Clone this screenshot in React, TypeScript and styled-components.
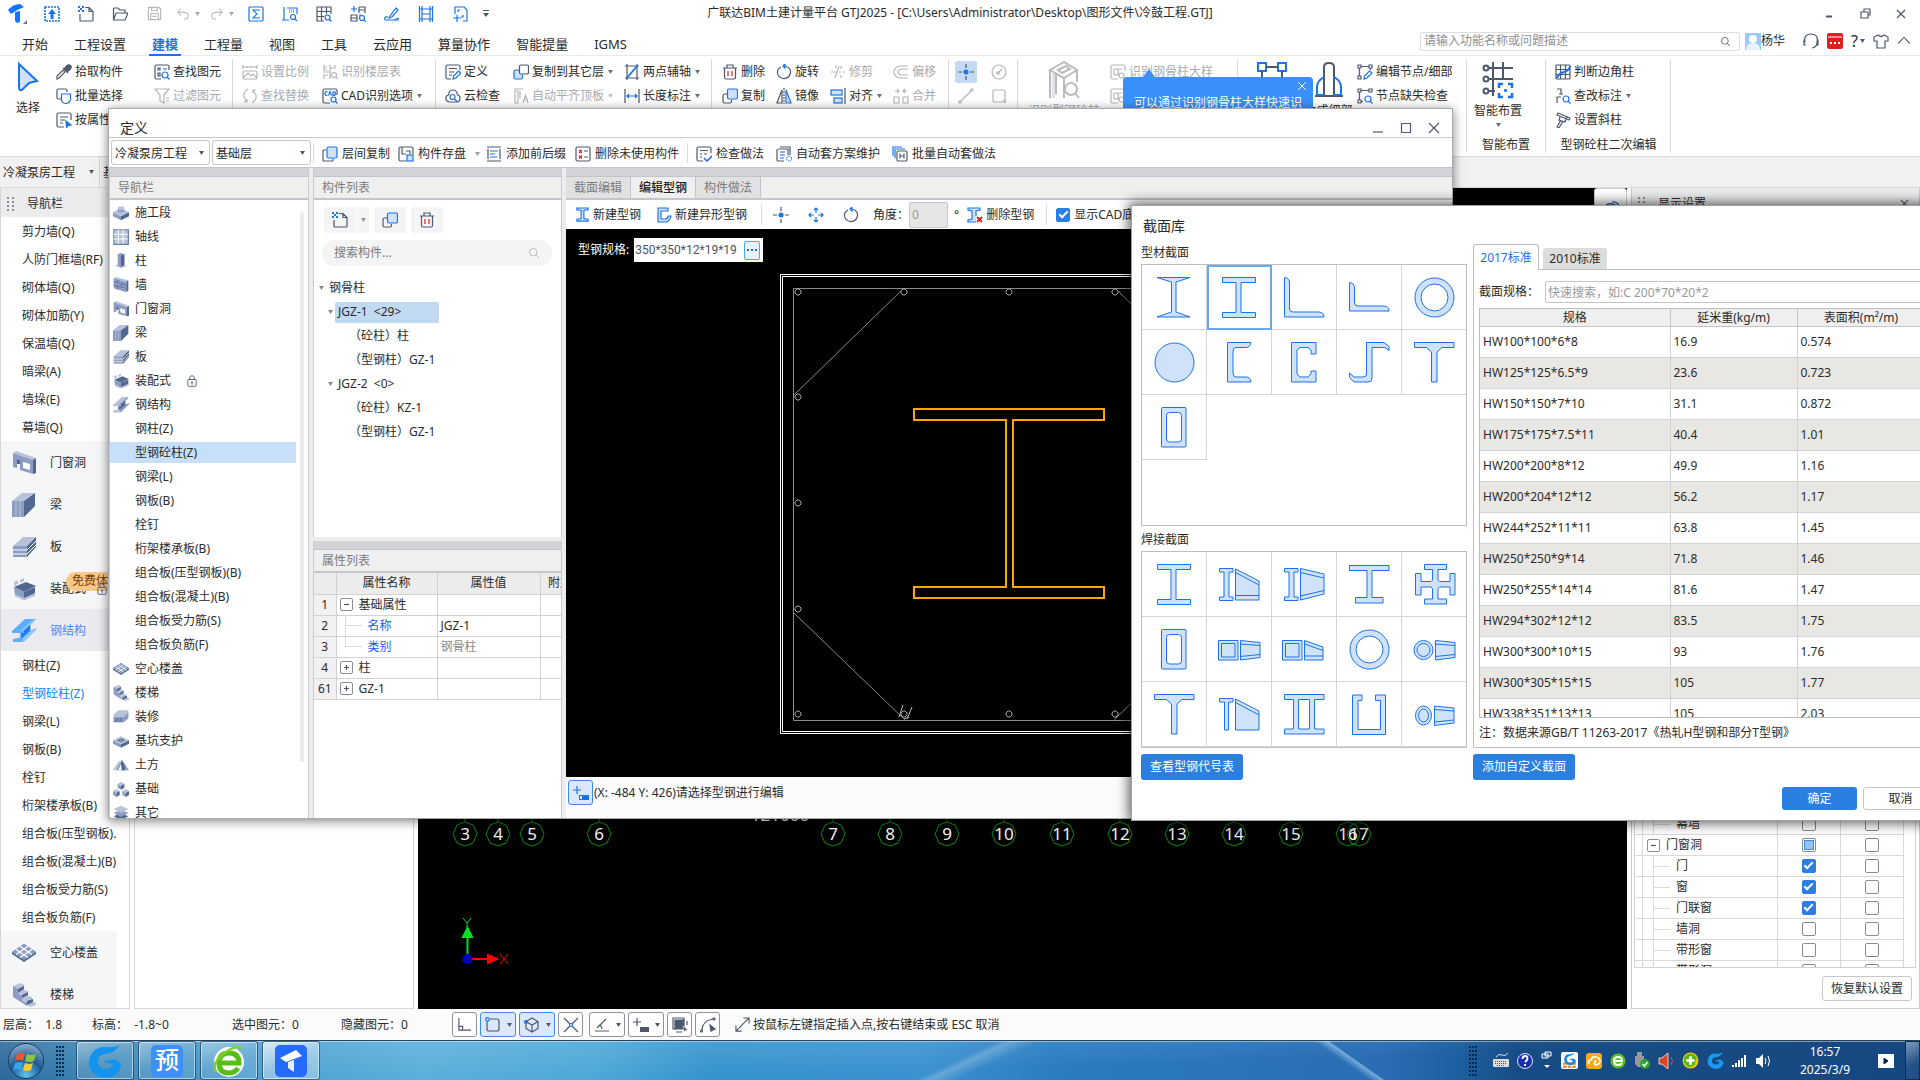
import React, { useState } from "react";
import styled, { createGlobalStyle, css } from "styled-components";

const BLUE = "#1a73e8";
const SLATE = "#4d586c";
const TEXT = "#2b2b2b";
const LINE = "#d9d9dc";

const Global = createGlobalStyle`
  *, *::before, *::after { box-sizing: border-box; }
  html, body { margin: 0; height: 100%; overflow: hidden; }
  body, button, input, select, table {
    font-family: "Noto Sans", "Noto Sans CJK SC", sans-serif;
    font-size: 12px;
    line-height: 16px;
    color: ${TEXT};
  }
  button { background: none; border: 0; padding: 0; margin: 0; white-space: nowrap; }
  input, select { margin: 0; outline: 0; }
  ul { list-style: none; margin: 0; padding: 0; }
  h1, h2, h3, p { margin: 0; font-weight: 400; font-size: inherit; }
  svg { display: block; flex: none; }
`;

/* ------------------------------------------------------------------ icons */

const glyphs: Record<string, React.ReactNode> = {
  pick: (<><path d="M1 15l2-1 6-6-2-2-6 6z" /><path d="M7 4l5 5M8 5l3-3.5q2-1.500 3.500 0t0 3.500L11 8z" fill="currentColor" /></>),
  batch: (<><path d="M5 11H2.500Q1 11 1 9.500V2.500Q1 1 2.500 1h7Q11 1 11 2.500V4" /><path d="M5.500 6h9v6q-1 3-4.500 3.500Q6 15 5.500 12z" stroke="var(--b)" fill="#fff" /></>),
  attr: (<><path d="M15 8V2.500Q15 1 13.500 1h-11Q1 1 1 2.500v11Q1 15 2.500 15H8M4 5h8M4 8h5M4 11h3" /><path d="M10 9l5 4-3 .5-1.500 2z" fill="var(--b)" stroke="var(--b)" /></>),
  find: (<><path d="M15 6V2.500Q15 1 13.500 1h-11Q1 1 1 2.500v11Q1 15 2.500 15H7M4 4h2v2H4zM4 9h2v3H4zM9 5h4" /><circle cx="11" cy="11" r="3" stroke="var(--b)" /><path d="M13 13l2.500 2.500" stroke="var(--b)" /></>),
  filter: <path d="M1 1h14l-5 6v8l-4-2V7zM12 10h3M12 13h3" />,
  scale: <path d="M1 3h14M1 1v4M15 1v4M5 2v2M9 2v2M3 7h10q2 0 2 2v4q0 2-2 2H3q-2 0-2-2V9q0-2 2-2M2 13l4-4 3 3 2-2 4 4" />,
  floors: (<><path d="M2 1v5h3M2 3h3M1 8h6M8 1v14M8 4h5V1M2 15v-4h4" /><circle cx="12" cy="11" r="2.500" /><path d="M14 13l2 2" /></>),
  replace: <path d="M6 1Q1 4 2 9l3 5M2 14h3v-3M10 15q5-3 4-8l-3-5M14 2h-3v3" />,
  cad: (<><path d="M15 7V2.500Q15 1 13.500 1h-11Q1 1 1 2.500v11Q1 15 2.500 15H8" /><path d="M5.500 4Q3 3 3 5.500T5.500 7M6.500 7.500L8 3.500l1.500 4M11 3.500v4q2.500 0 2.500-2t-2.500-2" stroke="var(--b)" /><circle cx="11.500" cy="11.500" r="2.500" stroke="var(--b)" /><path d="M13.500 13.500l2 2" stroke="var(--b)" /></>),
  define: (<><path d="M15 6V2.500Q15 1 13.500 1h-11Q1 1 1 2.500v11Q1 15 2.500 15H6M4 4.500h8M4 8h5M4 11h3" /><path d="M8 15l.5-3 5-5L16 9l-5 5z" stroke="var(--b)" /></>),
  cloud: (<><path d="M4 14Q0 13 1 9q1-2 2.500-2Q4 2 8 2t4.500 5Q15 7 15 10q0 4-3 4z" /><circle cx="7.500" cy="9" r="2.500" stroke="var(--b)" /><path d="M9.500 11l3 3" stroke="var(--b)" /></>),
  copyTo: (<><path d="M7 6H2.500Q1 6 1 7.500v6Q1 15 2.500 15H8q1.500 0 1.500-1.500V11" fill="var(--f)" stroke="var(--b)" /><rect x="6.500" y="1" width="9" height="9" rx="1.500" fill="#fff" /></>),
  flat: <path d="M1 1h9M2 3v12h3V3zM7 3v7M10 15l2.500-8 2.500 8M11 12h3" />,
  axis: (<><path d="M1 2h14M1 14h14M3 0v16M13 0v16" /><path d="M3 14L13 2" stroke="var(--b)" strokeWidth="1.800" /></>),
  length: (<><path d="M1 1v14M15 1v14" /><path d="M3 8h10M5 6L3 8l2 2M11 6l2 2-2 2" stroke="var(--b)" /></>),
  trash: (<><path d="M1 4h14M5 4V1h6v3M2.500 4v9.500Q2.500 15 4 15h8q1.500 0 1.500-1.500V4" /><path d="M6 7v5M10 7v5" stroke="var(--r)" /></>),
  rotate: (<><path d="M5 3Q1 5 1.500 9T7 14.500Q13 15 14.500 9 15 4 10 2.200" /><path d="M9 0v4l-2-2z" stroke="var(--b)" fill="var(--b)" /></>),
  trim: <path d="M6 1v3M5 14L9 2M1 8h5M9 8h2M13 8h2M11 2v3M11 11v3" />,
  offset: <path d="M15 2H7Q1 3 1 8t6 6h8M15 5H8Q5 6 5 8t3 3h7" />,
  copy: (<><path d="M5 6H2.500Q1 6 1 7.500v6Q1 15 2.500 15H8q1.500 0 1.500-1.500V12" /><rect x="5.500" y="1" width="10" height="10" rx="1.500" fill="var(--f)" stroke="var(--b)" /></>),
  mirror: (<><path d="M6 2v13H1z" /><path d="M10 2v13h5z" fill="var(--f)" stroke="var(--b)" /><path d="M8 0v16" strokeDasharray="2 1" /></>),
  align: (<><path d="M15 0v16" /><rect x="1" y="2" width="11" height="5" fill="var(--f)" stroke="var(--b)" /><rect x="4" y="10" width="8" height="5" fill="var(--f)" stroke="var(--b)" /></>),
  merge: <path d="M1 9h5v6H1zM10 9h5v6h-5zM2 3h4M4 1l2 2-2 2M14 3h-4M12 1l-2 2 2 2" />,
  point: (<><path d="M8 0v4M8 12v4M0 8h4M12 8h4" /><circle cx="8" cy="8" r="2" fill="var(--b)" stroke="var(--b)" /></>),
  circle: (<><circle cx="8" cy="8" r="7" /><path d="M7 9l4-4" /><circle cx="7" cy="9" r="1.200" /></>),
  line: (<><path d="M3 13L13 3" /><circle cx="2" cy="14" r="1.200" /><circle cx="14" cy="2" r="1.200" /></>),
  rect: (<><path d="M4 2h8q2 0 2 2v8M12 14H4q-2 0-2-2V4q0-2 2-2" /><circle cx="13.500" cy="13.500" r="1.200" /></>),
  recog: (<><path d="M15 7V2.500Q15 1 13.500 1h-11Q1 1 1 2.500v11Q1 15 2.500 15H8M4 5h8M8 5v6M4 11h5M4 5v6" /><circle cx="11.500" cy="11.500" r="2.500" /><path d="M13.500 13.500l2 2" /></>),
  nodeEdit: (<><path d="M1 1h3v3H1zM12 1h3v3h-3zM1 12h3v3H1zM4 2.500h8M2.500 4v8M13.500 4v2" /><path d="M7 15l.5-3 5-5L15 9l-5 5z" stroke="var(--b)" /></>),
  nodeMiss: (<><path d="M1 1h3v3H1zM12 1h3v3h-3zM1 12h3v3H1zM4 2.500h8M2.500 4v8M4 13.500h2" /><circle cx="11" cy="11" r="3" stroke="var(--b)" /><path d="M13 13l2.500 2.500" stroke="var(--b)" /></>),
  corner: (<><rect x="1" y="1" width="14" height="14" rx="1" /><path d="M1 5.500h14M1 10.500h14M5.500 1v14M10.500 1v14" /><path d="M2 14Q4 9 9 8t6-6" stroke="var(--b)" strokeWidth="1.800" /></>),
  mark: (<><path d="M2 1h4v5M4 6h4M2 15V9h4" /><circle cx="11" cy="11" r="3" stroke="var(--b)" /><path d="M13 13l2.500 2.500" stroke="var(--b)" /></>),
  slant: <path d="M3 1l12 5-1 2L2 3zM5 5l-1 3 6 2 1-2M8 9l-4 7-2-1 4-7M12 4l-2 5" />,
  search: (<><circle cx="7" cy="7" r="5" /><path d="M10.500 10.500l4 4" /></>),
  upload: (<><rect x="1" y="1" width="14" height="14" strokeDasharray="2 1" strokeWidth="1.600" stroke="var(--b)" /><path d="M8 3l4 5H9.500v5h-3V8H4z" fill="var(--b)" stroke="none" /></>),
  newDoc: (<><path d="M7 1.500h4l4 4V14q0 1-1 1H3q-1 0-1-1V8M11 1.500v4h4" /><path d="M0 0h2v2H0zM4 0h2v2H4zM2 2h2v2H2zM0 4h2v2H0zM4 4h2v2H4z" fill="var(--b)" stroke="none" /></>),
  open: <path d="M1.500 14V3q0-1 1-1H6l2 2h5v3M1.500 14L4 7h12l-3 7z" />,
  save: <path d="M1.500 1.500h11l2 2v11h-13zM5 1.500V5h6V1.500M4 14.500V8h8v6.500M6 11h4" />,
  undo: <path d="M2 6h7q5 0 5 4t-5 4M6 2L2 6l4 4" />,
  redo: <path d="M14 6H7q-5 0-5 4t5 4M10 2l4 4-4 4" />,
  sum: (<g stroke="var(--b)"><rect x="1" y="1" width="14" height="14" rx="1" /><path d="M11 5V4H5l4 4-4 4h6v-1" /></g>),
  sheet: (<><path d="M2 1v13h5M0 14h4M5 2h10v6" stroke="var(--b)" /><path d="M7 4h6M7 6h6" stroke="var(--b)" strokeDasharray="1 1" /><circle cx="11" cy="11" r="2.500" stroke="var(--b)" /><path d="M13 13l2 2" stroke="var(--b)" /></>),
  gridS: (<><path d="M15 8V1H1v14h7M1 5.500h14M1 10.500h7M5.500 1v14M10.500 1v7" /><circle cx="11.500" cy="11.500" r="2.500" stroke="var(--b)" /><path d="M13.500 13.500l2 2" stroke="var(--b)" /></>),
  gridT: (<><path d="M9 1h6v6M9 1v6M9 4h6M1 9h6v6H1zM1 12h6M9 9h2" /><path d="M4 0v6M1 3h6" stroke="var(--b)" /><circle cx="12" cy="12" r="2.500" stroke="var(--b)" /><path d="M14 14l2 2" stroke="var(--b)" /></>),
  sign: <path d="M1 14h14M1 14q-1-4 3-3M6 10l6-8 2 2-6 7-3 1zM10 14l5-2" stroke="var(--b)" />,
  ladder: <path d="M1.500 0v16M14.500 0v16M4 0v16M12 0v16M1 3h14M4 8h8M1 13h14" stroke="var(--b)" />,
  pageFit: (<g stroke="var(--b)"><path d="M3 8V1h9l3 3v11h-4M5 9v7M1 12h8M8 4H6v2M11 9v2H9" /></g>),
  layers: (<><path d="M4 4H2q-1 0-1 1v9q0 1 1 1h8q1 0 1-1v-1" /><rect x="5" y="1" width="10" height="11" rx="1.500" fill="var(--f)" stroke="var(--b)" /></>),
  saveC: (<><path d="M15 8V2.500Q15 1 13.500 1h-11Q1 1 1 2.500v11Q1 15 2.500 15H8M4 1v7h4M8 5h4v3" /><rect x="9" y="9" width="6" height="6" stroke="var(--b)" fill="var(--f)" /></>),
  prefix: (<><path d="M1 1h14M1 15h14M2 3v10M14 3v10" /><path d="M4 5h8M4 8h5M4 11h7" stroke="var(--b)" /></>),
  unused: (<><rect x="1" y="1" width="14" height="14" rx="1.500" /><path d="M9 5h4M9 11h4" /><path d="M4 4l3 3M7 4L4 7M4 9.500l3 3M7 9.500l-3 3" stroke="var(--r)" /></>),
  check: (<><path d="M15 7V2.500Q15 1 13.500 1h-11Q1 1 1 2.500v11Q1 15 2.500 15H7M4 4.500h8M4 8h2M8 8h3M4 11h2" /><path d="M8 12l3 3 5-5" stroke="var(--b)" strokeWidth="1.600" /></>),
  plan: (<><path d="M4 1h10v8M2 3h10v6M1 5v9q0 1 1 1h6M1 5V3M4 6h5" /><path d="M4 9h5M4 12h4" stroke="var(--b)" /><circle cx="13" cy="12.500" r="2.500" stroke="var(--b)" strokeDasharray="1 1" /></>),
  batchH: (<><path d="M1 10V1h9M3 12V3h10" stroke="var(--b)" /><rect x="5" y="5" width="10" height="10" rx="1" /><path d="M8 7.500v5M12 7.500v5M8 10h4" /></>),
  beam: <path d="M2 1h12v2h-1l-3.500.8v8.400L13 13h1v2H2v-2h1l3.500-.8V3.800L3 3H2z" stroke="var(--b)" fill="var(--f)" />,
  beamDel: (<><path d="M9 15H1v-2l4-1V4L1 3V1h12v2L9 4v5" stroke="var(--b)" fill="var(--f)" /><path d="M10 10l5 5M15 10l-5 5" stroke="var(--r)" strokeWidth="1.800" /></>),
  odd: <path d="M12 1H2v14h8q4-1 5-6h-3q0 3-3 3H5V4h7z" stroke="var(--b)" fill="var(--f)" />,
  move: <path d="M8 1v5M8 10v5M1 8h5M10 8h5M6 3l2-2 2 2M6 13l2 2 2-2M3 6L1 8l2 2M13 6l2 2-2 2" stroke="var(--b)" />,
  lock: (<><rect x="2.500" y="6" width="11" height="9" rx="1" /><path d="M5 6V4q0-3 3-3t3 3v2M8 11v2" /><circle cx="8" cy="10" r="1" /></>),
  head: <path d="M2 10Q0 1 8 1t6 9q0 4-5 5M2 7h-1v5h2M14 7h1v5h-2" />,
  shirt: <path d="M5 2L1 4v4h3v7h8V8h3V4l-4-2q-3 3-6 0z" />,
  chevron: <path d="M1 11l7-7 7 7" />,
  expand: <path d="M1 15L15 1M9 1h6v6M1 9v6h6" />,
  ortho: <path d="M2 1v13h13M2 10h4v4" />,
  snapBox: (<><path d="M5 2h7q2 0 2 2v8q0 2-2 2H4q-2 0-2-2V5" /><circle cx="2.500" cy="2.500" r="1.800" stroke="var(--b)" /></>),
  cube: (<><path d="M8 1l6 3.500v7L8 15l-6-3.500v-7zM2 4.500L8 8l6-3.500M8 8v7" /><circle cx="2" cy="5" r="1.500" stroke="var(--b)" /></>),
  cross: (<><path d="M1 1l14 14M15 1L1 15" /><circle cx="8" cy="8" r="1.500" stroke="var(--b)" fill="#fff" /></>),
  angle: (<><path d="M3 11L12 2M5 8q3 1 3 4" /><path d="M1 14h14" stroke="#a9adb8" strokeWidth="2" /></>),
  dynIn: (<><path d="M4 1v8M0 5h8" /><path d="M7 10h9v5H7z" fill="currentColor" stroke="none" /></>),
  dynInOn: (<><path d="M4 1v8M0 5h8" stroke="var(--b)" /><path d="M6 10h10v5H6z" fill="var(--b)" stroke="none" /><path d="M7 11h2v3H7z" fill="#fff" stroke="none" /></>),
  winSel: (<><path d="M4 12H1V1h11v3M15 8V4M4 15h6" /><path d="M3 3h9v9H3z" fill="currentColor" /><path d="M11 9l5 4-3 .5-1 2z" fill="currentColor" stroke="#fff" strokeWidth=".5" /></>),
  arcSel: (<><path d="M2 13Q2 4 13 2" /><circle cx="1.500" cy="14" r="1" /><circle cx="14" cy="1.800" r="1" /><path d="M10 8l5 4-4 2z" fill="currentColor" /></>),
  view: (<><path d="M1 9q6-9 14 0M4 8q4-3 8 0" /><path d="M9 3q5 0 6 5" stroke="var(--b)" /></>),
};

const GlyphSvg = styled.svg<{ $off?: boolean }>`
  --b: ${(p) => (p.$off ? "#b4b6ba" : BLUE)};
  --r: ${(p) => (p.$off ? "#b4b6ba" : "#d62027")};
  --f: ${(p) => (p.$off ? "#fff" : "#cfe1fb")};
  color: ${(p) => (p.$off ? "#b4b6ba" : SLATE)};
  fill: none;
  stroke: currentColor;
  stroke-width: 1.200;
`;

const Glyph = ({ n, s = 16, off }: { n: string; s?: number; off?: boolean }) => (
  <GlyphSvg $off={off} width={s} height={s} viewBox="0 0 16 16" aria-hidden="true">{glyphs[n]}</GlyphSvg>
);

const CaretSvg = styled.svg<{ $c?: string }>`fill: ${(p) => p.$c || SLATE};`;
const Caret = ({ c }: { c?: string }) => (
  <CaretSvg $c={c} width="5" height="4" viewBox="0 0 5 4" aria-hidden="true"><path d="M0 0h5L2.500 4z" /></CaretSvg>
);

/* solid building-element icons of the navigation tree */
const L = "#b8c3da", M = "#8c9cc2", D = "#52678f";
const solids: Record<string, (l: string, m: string, d: string) => React.ReactNode> = {
  stage: (l, m, d) => (<><path d="M0 11l12-6 12 6-12 6z" fill={l} /><path d="M0 11l12 6v6L0 17z" fill={m} /><path d="M24 11l-12 6v6l12-6z" fill={d} /><ellipse cx="12" cy="8" rx="5" ry="3" fill={m} /><ellipse cx="12" cy="5" rx="5" ry="3" fill={l} /></>),
  grid: (l, m, d) => (<><rect x="1" y="1" width="22" height="22" fill={l} stroke={m} strokeWidth="2" /><path d="M8 1v22M15 1v22M1 8h22M1 15h22" stroke="#fff" strokeWidth="1.500" /><path d="M23 1v22H1" stroke={d} fill="none" /></>),
  column: (l, m, d) => (<><path d="M3 19l9-4 9 4-9 4z" fill={l} /><path d="M7 2l5-2 5 2v16l-5 3-5-3z" fill={m} /><path d="M12 4l5-2v16l-5 3z" fill={d} /></>),
  wall: (l, m, d) => (<><path d="M1 2l3-2 19 5-3 2z" fill={l} /><path d="M1 2l19 5v16L1 17z" fill={m} /><path d="M20 7l3-2v15l-3 3z" fill={d} /><path d="M1 7l19 5M1 12l19 5M7 4v5M13 10v5M7 13v6" stroke={d} fill="none" /></>),
  opening: (l, m, d) => (<><path d="M1 2l3-2 20 7-3 2z" fill={l} /><path d="M1 2l20 7v14l-13-4V9L5 8v9l-4-1z" fill={m} /><path d="M11 11l7 2v6l-7-2z" fill="#fff" /><path d="M21 9l3-2v15l-3 1zM5 8l3 1v4H5z" fill={d} /></>),
  beam: (l, m, d) => (<><path d="M0 8L10 0h13L12 8z" fill={l} /><path d="M0 8h12v16H0z" fill={m} /><path d="M12 8L23 0v13L12 24z" fill={d} /><path d="M4 8v16M8 8v16" stroke={l} /></>),
  slab: (l, m, d) => (<><path d="M1 11L11 2h13l-9 9z" fill={l} /><path d="M1 11h14v11H1z" fill={m} /><path d="M15 11l9-9v10l-9 10z" fill={d} /><path d="M1 15h14l9-9M1 19h14l9-9" stroke="#fff" fill="none" /></>),
  precast: (l, m, d) => (<><path d="M2 10l12-5 10 4-12 6z" fill={d} /><path d="M2 10l10 5v8L3 19z" fill={m} /><path d="M12 15l11-5v8l-11 5z" fill={d} /><path d="M2 5l4-2v4L2 9zM8 3l4-2v3L8 6zM3 17l9 4 11-5v3l-11 4-9-4z" fill={l} /></>),
  steel: (l, m, d) => (<><path d="M0 12L13 0h11L12 12z" fill={l} /><path d="M8 12l14-12v3l-3 2v6l5-2v2L12 23H1v-3h6z" fill={m} /><path d="M9 14l9-8v6l-9 8z" fill={d} /><path d="M0 12h12v2H0zM1 20l6-1h4l-1 4H1z" fill={l} /></>),
  hollow: (l, m, d) => (<><path d="M0 11l12-8 12 8v2l-12 8-12-8z" fill={d} /><path d="M0 11l12-8 12 8-12 8z" fill={m} /><path d="M4 8.500l12 8M8 5.500l12 8M4 13.500l12-8M8 16.500l12-8" stroke="#fff" strokeWidth="1.200" /></>),
  stair: (l, m, d) => (<><path d="M1 3l8-3 3 2v5l4 1v5l4 1v4l4 2v2l-6 2L1 12z" fill={l} /><path d="M1 3l5 3v5l4 2v5l5 2v3L1 14z" fill={m} /><path d="M6 6l6-3v3L6 10zM10 12l6-3v3l-6 3zM15 18l6-2v3l-6 3z" fill={d} /></>),
  finish: (l, m, d) => (<><path d="M1 8l7-6h15v12l-7 6H1z" fill={l} /><path d="M1 12h15l7-7v9l-7 6H1z" fill={m} /><path d="M3 15h12M3 18h12" stroke={d} strokeDasharray="2 2" strokeWidth="2" /></>),
  pit: (l, m, d) => (<><path d="M0 11l12-6 12 6-12 6z" fill={l} /><path d="M0 11l12 6v5L0 16z" fill={m} /><path d="M24 11l-12 6v5l12-6z" fill={d} /><path d="M6 11l6-3 6 3-6 3z" fill={d} /><path d="M10 10l4 2" stroke="#fff" /></>),
  earth: (l, m, d) => (<><path d="M0 20L9 5l6 15z" fill={l} /><path d="M5 20L13 4l11 16z" fill={m} /><path d="M13 4l4 7 1 9h-6z" fill={d} /><path d="M8 20l4-9 1 9z" fill="#fff" /></>),
  base: (l, m, d) => (<>{[[7, 1], [0, 12], [14, 12]].map(([x, y]) => (<g key={x} transform={`translate(${x} ${y})`}><path d="M0 3l5-3 5 3-5 3z" fill={l} /><path d="M0 3l5 3v6L0 9z" fill={m} /><path d="M10 3L5 6v6l5-3z" fill={d} /></g>))}</>),
  other: (l, m, d) => (<><path d="M1 17l11-5 11 5-11 6z" fill={d} /><path d="M1 12l11-5 11 5-11 6z" fill={m} /><path d="M1 6l11-5 11 5-11 6z" fill={l} /></>),
};
const Solid = ({ n, s = 16, active }: { n: string; s?: number; active?: boolean }) => (
  <svg width={s} height={s} viewBox="0 0 24 24" aria-hidden="true">
    {active ? solids[n]("#5aaefc", "#8fc6ff", "#1b7df5") : solids[n](L, M, D)}
  </svg>
);

/* ------------------------------------------------------------ main window */

const Desktop = styled.div`
  height: 100vh;
  width: 100%;
  position: relative;
  overflow: hidden;
  display: flex;
  flex-direction: column;
  background: #fff;
`;

const TitleBar = styled.header`
  height: 27px;
  flex: none;
  display: grid;
  grid-template-columns: 1fr auto 1fr;
  align-items: center;
  h1 { padding-bottom: 2px; }
`;
const QuickBar = styled.div`display: flex; align-items: center;`;
const QuickButton = styled.button<{ $w?: number }>`
  width: ${(p) => p.$w || 34}px;
  height: 24px;
  display: flex;
  align-items: center;
  justify-content: center;
  gap: 5px;
`;
const WindowButtons = styled.div<{ $gap: number; $pad: number }>`
  display: flex;
  justify-content: flex-end;
  align-items: center;
  gap: ${(p) => p.$gap}px;
  padding-right: ${(p) => p.$pad}px;
`;

const MenuBar = styled.nav`
  height: 29px;
  flex: none;
  display: flex;
  padding: 0 5px 0 9px;
  border-bottom: 1px solid #e8eaed;
`;
const MenuTab = styled.button<{ $on?: boolean }>`
  padding: 7px 3px 0;
  margin: 0 10px;
  height: 29px;
  font-size: 13px;
  display: flex;
  align-items: flex-start;
  line-height: 20px;
  ${(p) => p.$on && css`color: ${BLUE}; font-weight: 700; border-bottom: 2px solid ${BLUE};`}
`;
const MenuRight = styled.div`
  margin-left: auto;
  display: flex;
  align-items: center;
`;
const HelpSearch = styled.label`
  width: 320px;
  height: 19px;
  border: 1px solid #dcdde0;
  border-radius: 2px;
  display: flex;
  align-items: center;
  padding: 0 8px 0 3px;
  margin-right: 5px;
  input { flex: 1; border: 0; padding: 0; background: none; min-width: 0; }
  input::placeholder { color: #8d8f94; opacity: 1; }
`;
const User = styled.button`display: flex; align-items: center; margin-right: 14px;`;
const TopIcon = styled.button`margin: 0 4px; display: flex; align-items: center; gap: 2px; font-size: 16px;`;

const Ribbon = styled.section`
  height: 100px;
  flex: none;
  display: flex;
  padding: 3px 0;
`;
const Group = styled.div<{ $w: number; $pad?: number }>`
  width: ${(p) => p.$w}px;
  padding-left: ${(p) => p.$pad || 0}px;
  flex: none;
  display: grid;
  grid-template-rows: 73px 1fr;
  border-right: 1px solid ${LINE};
`;
const GroupBody = styled.div`display: flex; padding-top: 1px;`;
const GroupLabel = styled.div<{ $pull?: number }>`
  text-align: center;
  padding-top: 5px;
  padding-right: ${(p) => p.$pull || 0}px;
`;
const Col = styled.div<{ $w: number }>`
  width: ${(p) => p.$w}px;
  flex: none;
  display: flex;
  flex-direction: column;
`;
const Tool = styled.button<{ $off?: boolean }>`
  height: 24px;
  display: flex;
  align-items: center;
  gap: 3px;
  color: ${(p) => (p.$off ? "#a9abb0" : TEXT)};
  ${CaretSvg} { margin-left: 1px; }
`;
const BigTool = styled.button<{ $w: number; $off?: boolean }>`
  width: ${(p) => p.$w}px;
  flex: none;
  display: flex;
  flex-direction: column;
  align-items: center;
  gap: 4px;
  padding-top: 1px;
  color: ${(p) => (p.$off ? "#a9abb0" : TEXT)};
`;
const SelectTool = styled(BigTool)`gap: 8px; padding-top: 2px;`;
const DrawGrid = styled.div`
  display: grid;
  grid-template-columns: 22px 22px;
  grid-auto-rows: 22px;
  gap: 2px 11px;
  padding-top: 1px;
`;
const DrawTool = styled.button<{ $on?: boolean }>`
  display: grid;
  place-items: center;
  border-radius: 2px;
  background: ${(p) => (p.$on ? "#c3daf2" : "none")};
`;

const ContextBar = styled.div`
  height: 32px;
  flex: none;
  background: #f1f1f1;
  border: 1px solid #dadada;
  border-width: 1px 0;
  display: flex;
`;
const ComboWrap = styled.label<{ $w: number; $framed?: boolean }>`
  width: ${(p) => p.$w}px;
  display: grid;
  align-items: center;
  border-right: 1px solid #d4d6d9;
  ${(p) => p.$framed && css`border: 1px solid #c4c7cb; border-radius: 3px; height: 25px; background: #fff;`}
  select, ${CaretSvg} { grid-area: 1 / 1; }
  ${CaretSvg} { justify-self: end; margin-right: 5px; pointer-events: none; }
  select { appearance: none; border: 0; background: none; padding: 2px 0 0 3px; width: 100%; height: 100%; }
`;
const Combo = ({ w, value, label, framed }: { w: number; value: string; label: string; framed?: boolean }) => (
  <ComboWrap $w={w} $framed={framed}>
    <select aria-label={label} defaultValue={value}><option>{value}</option></select>
    <Caret />
  </ComboWrap>
);

const Work = styled.main`
  flex: 1;
  min-height: 0;
  display: flex;
`;
const SideNav = styled.aside`
  width: 130px;
  flex: none;
  border: 1px solid #d6d6d9;
  border-top: 0;
  overflow: hidden;
`;
const PanelHead = styled.h2`
  height: 29px;
  background: #ececee;
  display: flex;
  align-items: center;
  gap: 13px;
  padding: 2px 0 0 6px;
`;
const SideItem = styled.button<{ $on?: boolean }>`
  display: block;
  width: 100%;
  height: 28px;
  text-align: left;
  padding: 2px 0 0 21px;
  color: ${(p) => (p.$on ? "#0a84ff" : TEXT)};
`;
const SideGroup = styled.button<{ $on?: boolean }>`
  width: ${(p) => (p.$on ? 128 : 116)}px;
  height: 42px;
  display: flex;
  align-items: center;
  gap: 14px;
  padding: 2px 0 0 11px;
  background: ${(p) => (p.$on ? "#e9ebef" : "#f5f6f8")};
  color: ${(p) => (p.$on ? "#4a8af4" : TEXT)};
  position: relative;
`;
const Badge = styled.span`
  position: absolute;
  left: 65px;
  top: 5px;
  height: 19px;
  border-radius: 10px 0 0 10px;
  background: #f6c98b;
  color: #7a3d10;
  padding: 1px 6px;
`;
const LockMark = styled.span`position: relative; z-index: 1; margin-left: -4px;`;
const ListPane = styled.div`
  width: 280px;
  flex: none;
  margin-left: 4px;
  border: 1px solid #d6d6d9;
  border-top: 0;
`;
const Viewport = styled.div`
  flex: 1;
  min-width: 0;
  margin: 0 4px;
  background: #000;
  display: flex;
  justify-content: space-between;
  align-items: flex-end;
  position: relative;
`;
const ViewTools = styled.div`
  position: absolute;
  top: 0;
  right: 0;
  width: 33px;
  height: 60px;
  background: #fff;
  border: 1px solid #ccc;
  border-radius: 3px 3px 0 0;
  display: flex;
  justify-content: center;
  padding-top: 9px;
`;
const DisplayPane = styled.aside`
  width: 289px;
  flex: none;
  border: 1px solid #c9cbce;
  border-top: 0;
  display: flex;
  flex-direction: column;
  padding: 0 3px 7px 2px;
`;
const DisplayHead = styled(PanelHead)`
  margin: 0 -3px 0 -2px;
  justify-content: space-between;
  padding: 2px 9px 0 6px;
  span { flex: 1; }
`;
const DisplayScroll = styled.div`
  flex: 1;
  min-height: 0;
  overflow: hidden;
  display: flex;
  flex-direction: column;
  justify-content: flex-end;
  border: 1px solid #d0d2d5;
`;
const DisplayTable = styled.table`
  border-collapse: collapse;
  width: 268px;
  table-layout: fixed;
  margin-bottom: -15px;
  td { height: 21px; padding: 0; border: 1px solid ${LINE}; border-left: 0; text-align: center; line-height: 14px; }
  td:first-child { text-align: left; }
  input { vertical-align: middle; }
`;
const NameCell = styled.span<{ $child?: boolean }>`
  display: flex;
  align-items: center;
  height: 20px;
  gap: 6px;
  margin-left: 7px;
  padding-left: ${(p) => (p.$child ? 10 : 4)}px;
  border-left: 1px solid ${LINE};
`;
const Twig = styled.span<{ $end?: boolean }>`
  width: 17px;
  align-self: stretch;
  background:
    linear-gradient(#dcdcdc, #dcdcdc) 0 50% / 100% 1px no-repeat,
    linear-gradient(#dcdcdc, #dcdcdc) 0 0 / 1px ${(p) => (p.$end ? "50%" : "100%")} no-repeat;
`;
const Box = styled.button`
  width: 13px;
  height: 13px;
  flex: none;
  border: 1px solid #8a8d93;
  border-radius: 2px;
  background: #fff;
  display: grid;
  place-items: center;
`;
const Expander = ({ open, label }: { open?: boolean; label: string }) => (
  <Box aria-label={label}><GlyphSvg width="7" height="7" viewBox="0 0 7 7"><path d={open ? "M1 3.500h5" : "M1 3.500h5M3.500 1v5"} /></GlyphSvg></Box>
);
const Check = styled.input<{ $partial?: boolean }>`
  appearance: none;
  width: 14px;
  height: 14px;
  flex: none;
  border: 1px solid #888b91;
  border-radius: 2px;
  background: #fff;
  display: inline-grid;
  place-items: center;
  &:checked { background: #2b7fe4; border-color: #2b7fe4; }
  &:checked::after {
    content: "";
    width: 9px;
    height: 5px;
    border: solid #fff;
    border-width: 0 0 2px 2px;
    rotate: -45deg;
    margin-bottom: 3px;
  }
  ${(p) => p.$partial && css`&::after { content: ""; width: 10px; height: 10px; background: #94c3fb; border: 1px solid #3d8bea; }`}
`;
const PlainButton = styled.button`
  align-self: flex-end;
  margin: 8px 4px 0 0;
  height: 25px;
  padding: 0 8px;
  border: 1px solid #c6c8cc;
  border-radius: 3px;
  background: #fff;
`;

const StatusBar = styled.footer`
  height: 31px;
  flex: none;
  background: #fbfbfb;
  display: flex;
  align-items: center;
  padding-left: 3px;
`;
const StatusText = styled.span<{ $w: number }>`width: ${(p) => p.$w}px; white-space: pre;`;
const StatusTool = styled.button<{ $w?: number; $on?: boolean; $gap?: number }>`
  width: ${(p) => p.$w || 25}px;
  height: 25px;
  margin-right: ${(p) => p.$gap || 3}px;
  border: 1px solid ${(p) => (p.$on ? "#3f8ae8" : "#8f9297")};
  border-radius: 3px;
  background: ${(p) => (p.$on ? "#dbe8fb" : "#fff")};
  display: flex;
  align-items: center;
  justify-content: center;
  gap: 6px;
`;

/* --------------------------------------------------------------- task bar */

const TaskBar = styled.footer`
  height: 40px;
  flex: none;
  border-top: 1px solid #24435c;
  box-shadow: inset 0 1px 0 rgba(255, 255, 255, 0.45);
  background:
    linear-gradient(178deg, rgba(255,255,255,.18), rgba(255,255,255,0) 60%),
    linear-gradient(155deg, transparent 48%, rgba(255,255,255,.22) 50%, transparent 54%) 660px 0 / 620px 100% no-repeat,
    linear-gradient(35deg, transparent 44%, rgba(190,230,255,.5) 50%, transparent 51%) 1270px 0 / 170px 100% no-repeat,
    linear-gradient(90deg, #1b5c92 0, #2a78ad 4%, #3f97cb 12%, #56acd9 22%, #4aa6d8 31%, #3592cc 37%, #3c92d0 48%, #2b7cc0 55%, #2a6db3 72%, #1d5f9f 76%, #174d86 79%, #174780 100%);
  display: flex;
  align-items: stretch;
  gap: 4px;
`;
const TaskGrip = styled.span`
  width: 9px;
  margin: 5px 7px 4px 0;
  background: radial-gradient(circle at 1px 1px, #0b2a48 0.8px, transparent 1px) 0 0 / 3px 4px;
`;
const TrayGrip = styled(TaskGrip)`align-self: stretch;`;
const Start = styled.button`width: 52px; display: grid; place-items: center;`;
const TaskButton = styled.button<{ $on?: boolean }>`
  width: 58px;
  display: grid;
  place-items: center;
  border: 1px solid rgba(20, 60, 95, 0.75);
  border-radius: 3px;
  box-shadow: inset 0 0 0 1px rgba(255, 255, 255, 0.5);
  background: ${(p) => (p.$on
    ? "linear-gradient(160deg, rgba(255,255,255,.75), rgba(255,255,255,.4) 50%, rgba(255,255,255,.3))"
    : "linear-gradient(160deg, rgba(255,255,255,.4), rgba(255,255,255,.12) 50%, rgba(255,255,255,.1))")};
`;
const AppTile = styled.span`
  width: 32px;
  height: 32px;
  border-radius: 5px;
  background: #3f8ffb;
  color: #fff;
  font-size: 24px;
  line-height: 30px;
  font-weight: 500;
`;
const Tray = styled.div`
  margin-left: auto;
  display: flex;
  align-items: center;
  gap: 8px;
`;
const Clock = styled.time`
  color: #fff;
  text-align: center;
  width: 90px;
  line-height: 18px;
  white-space: pre-line;
`;
const ShowDesktop = styled.button`
  width: 15px;
  align-self: stretch;
  margin-left: 3px;
  border: 1px solid #0d2f55;
  background: linear-gradient(150deg, rgba(255,255,255,.45), rgba(255,255,255,.05) 60%);
`;

/* --------------------------------------------------------------- windows */

const Tip = styled.div`
  position: absolute;
  left: 1123px;
  top: 77px;
  width: 190px;
  height: 60px;
  border-radius: 4px;
  background: #3a90fb;
  color: #fff;
  padding: 18px 11px 0;
  white-space: nowrap;
  &::before {
    content: "";
    position: absolute;
    left: 20px;
    top: -8px;
    border: 6px solid transparent;
    border-top: 0;
    border-bottom: 8px solid #3a90fb;
  }
  button { position: absolute; right: 7px; top: 5px; }
`;
const DefineWindow = styled.section`
  position: absolute;
  left: 108px;
  top: 108px;
  width: 1345px;
  height: 711px;
  background: #fff;
  border: 1px solid #a8aaad;
  box-shadow: 0 2px 10px rgba(0, 0, 0, 0.5);
  display: flex;
  flex-direction: column;
`;
const WinTitle = styled.header`
  height: 29px;
  flex: none;
  display: flex;
  justify-content: space-between;
  align-items: center;
  padding: 9px 0 0 11px;
  border-bottom: 1px solid #c4c7cb;
  h2 { font-size: 14px; line-height: 20px; }
`;
const WinTools = styled.div`
  height: 29px;
  flex: none;
  display: flex;
  align-items: center;
  gap: 2px;
  padding-left: 2px;
`;
const WinTool = styled.button<{ $gap?: number }>`
  display: flex;
  align-items: center;
  gap: 4px;
  padding-top: 2px;
  margin-left: ${(p) => (p.$gap === undefined ? 7 : p.$gap)}px;
  ${CaretSvg} { margin: 0 1px 0 5px; }
`;
const Rule = styled.span<{ $l?: number }>`width: 1px; height: 20px; background: ${LINE}; margin-left: ${(p) => p.$l || 0}px;`;
const Docks = styled.div`
  flex: 1;
  min-height: 0;
  display: grid;
  grid-template-columns: 200px 249px 1fr;
  gap: 4px;
  background: #ededee;
  border-top: 1px solid #c3c6ca;
`;
const Dock = styled.section<{ $bare?: boolean }>`
  min-width: 0;
  min-height: 0;
  background: #fff;
  border: 1px solid #c9cbd0;
  border-width: ${(p) => (p.$bare ? "0" : "0 1px")};
  display: flex;
  flex-direction: column;
  overflow: hidden;
`;
const DockStack = styled.div`display: grid; grid-template-rows: 369px 1fr; gap: 4px; min-height: 0;`;
const DockBand = styled.div`height: 9px; flex: none; background: #d3d4da; border-bottom: 1px solid #c1c4cb;`;
const DockHead = styled.h3`
  height: 23px;
  flex: none;
  background: #efefef;
  border-bottom: 2px solid #c3c6cb;
  color: #7b7b7b;
  padding: 3px 8px 0;
`;
const NavScroll = styled.div`
  flex: 1;
  min-height: 0;
  display: flex;
  overflow: hidden;
  ul { flex: 1; }
  li { height: 24px; padding-top: 2px; }
`;
const NavRow = styled.button<{ $on?: boolean; $child?: boolean }>`
  width: 186px;
  height: 21px;
  display: flex;
  align-items: center;
  gap: 6px;
  padding-left: ${(p) => (p.$child ? 25 : 3)}px;
  background: ${(p) => (p.$on ? "#c7dff9" : "none")};
  svg + span + svg { margin-left: 9px; }
`;
const Thumb = styled.span`width: 4px; height: 550px; margin: 12px 4px 0 0; border-radius: 2px; background: #ebebed;`;

const SoftTools = styled.div`display: flex; padding: 7px 10px; gap: 5px;`;
const SoftTool = styled.button<{ $w?: number; $join?: boolean }>`
  width: ${(p) => p.$w || 32}px;
  height: 26px;
  border-radius: 2px;
  background: #f4f4f4;
  display: grid;
  place-items: center;
  margin-left: ${(p) => (p.$join ? -4 : 0)}px;
`;
const SoftSearch = styled.label`
  margin: 0 9px 10px 8px;
  height: 26px;
  border-radius: 13px;
  background: #f4f4f4;
  display: flex;
  align-items: center;
  padding: 0 12px;
  input { flex: 1; min-width: 0; border: 0; background: none; padding: 0; }
  input::placeholder { color: #77797d; opacity: 1; }
`;
const TreeRow = styled.li<{ $depth: number }>`
  height: 24px;
  display: flex;
  align-items: center;
  gap: 2px;
  padding-left: ${(p) => [5, 14, 32][p.$depth]}px;
`;
const TreeLabel = styled.button<{ $on?: boolean }>`
  height: 21px;
  padding: 0 3px;
  border-radius: 2px;
  text-align: left;
  white-space: pre;
  ${(p) => p.$on && css`width: 104px; background: #c1d9f1;`}
`;
const PropTable = styled.table`
  border-collapse: collapse;
  table-layout: fixed;
  width: 266px;
  th, td { height: 21px; border: 1px solid #cfd1d4; border-left: 0; padding: 0 0 0 3px; line-height: 14px; font-weight: 400; text-align: left; white-space: nowrap; }
  thead th { background: #ececec; text-align: center; padding: 0; border-top: 0; }
  tbody th { background: #f1f1f1; text-align: center; padding: 0; }
`;
const PropName = styled.span<{ $key?: boolean }>`
  display: flex;
  align-items: center;
  gap: 6px;
  height: 20px;
  padding-left: ${(p) => (p.$key ? 5 : 0)}px;
  color: ${(p) => (p.$key ? "#1a5cff" : TEXT)};
`;
const Muted = styled.span`color: #8a8a8a;`;

const DockTabs = styled.div`
  height: 23px;
  flex: none;
  display: flex;
  background: #efefef;
  border-bottom: 2px solid #c3c6cb;
`;
const DockTab = styled.button<{ $on?: boolean }>`
  width: 65px;
  border-right: 1px solid #c1c4cb;
  color: ${(p) => (p.$on ? "#222" : "#7b7b7b")};
  background: ${(p) => (p.$on ? "#efefef" : "#e1e1e2")};
  font-weight: ${(p) => (p.$on ? 500 : 400)};
`;
const EditTools = styled.div`
  height: 29px;
  flex: none;
  display: flex;
  align-items: center;
  padding-left: 9px;
  white-space: nowrap;
`;
const EditTool = styled.button<{ $l?: number }>`
  display: flex;
  align-items: center;
  gap: 3px;
  margin-left: ${(p) => p.$l || 0}px;
`;
const AngleInput = styled.input`
  width: 39px;
  height: 26px;
  margin: 0 6px 0 0;
  border: 1px solid #c3c6cc;
  border-radius: 2px;
  background: #e6e6e6;
  padding: 0 2px;
  color: #9a9a9a;
`;
const CheckLabel = styled.label`display: flex; align-items: center; gap: 4px; margin-left: 9px;`;
const Stage = styled.div`
  flex: 1;
  min-height: 0;
  background: #000;
  display: grid;
  > * { grid-area: 1 / 1; }
`;
const SpecLabel = styled.label`
  align-self: start;
  justify-self: start;
  margin: 9px 0 0 12px;
  color: #fff;
  display: flex;
  align-items: center;
  gap: 5px;
`;
const SpecBox = styled.span`
  width: 129px;
  height: 24px;
  background: #fff;
  display: flex;
  align-items: center;
  padding-right: 3px;
  input { flex: 1; min-width: 0; border: 0; padding: 0 0 0 1px; color: #4d5464; font-family: Roboto, "Noto Sans CJK SC", sans-serif; }
  button { width: 16px; height: 19px; border: 1px solid #5ba0ea; border-radius: 2px; background: #e9f2fd; display: grid; place-items: center; }
`;
const EditStatus = styled.div`
  height: 41px;
  flex: none;
  background: #fcfcfc;
  display: flex;
  align-items: flex-start;
  padding: 3px 2px;
  p { line-height: 25px; }
`;

const LibraryWindow = styled.section`
  position: absolute;
  left: 1131px;
  top: 205px;
  width: 820px;
  height: 616px;
  background: #fff;
  border: 1px solid #9da0a4;
  box-shadow: 0 0 12px 2px rgba(0, 0, 0, 0.65);
  padding: 10px 9px;
  display: flex;
  flex-direction: column;
  h2 { font-size: 14px; line-height: 20px; padding-left: 2px; }
`;
const LibraryBody = styled.div`display: grid; grid-template-columns: 326px 1fr; gap: 6px;`;
const SectionLabel = styled.h3<{ $t: number }>`padding: ${(p) => p.$t}px 0 3px;`;
const ProfileGrid = styled.div<{ $h: number }>`
  height: ${(p) => p.$h}px;
  border: 1px solid #bcbec2;
  display: grid;
  grid-template-columns: repeat(5, 65px);
  grid-auto-rows: 65px;
  overflow: hidden;
`;
const ProfileCell = styled.button<{ $on?: boolean }>`
  border: 1px solid ${(p) => (p.$on ? "#6aa9e8" : "#d4d5d7")};
  border-width: 0 1px 1px 0;
  display: grid;
  place-items: center;
  ${(p) => p.$on && css`box-shadow: inset 2px 2px 0 #6aa9e8, inset -1px -1px 0 #6aa9e8;`}
  overflow: hidden;
`;
const Primary = styled.button<{ $w: number; $h?: number }>`
  width: ${(p) => p.$w}px;
  height: ${(p) => p.$h || 26}px;
  border-radius: 3px;
  background: #2b7fe1;
  color: #fff;
`;
const Tabs = styled.div`
  display: flex;
  align-items: flex-end;
  gap: 4px;
  height: 25px;
  margin-top: 8px;
`;
const StdTab = styled.button<{ $on?: boolean }>`
  width: ${(p) => (p.$on ? 66 : 64)}px;
  height: ${(p) => (p.$on ? 26 : 21)}px;
  border-radius: 3px 3px 0 0;
  background: #dcdcdc;
  ${(p) => p.$on && css`background: #fff; color: ${BLUE}; border: 1px solid #bcbec2; border-bottom: 0; margin-bottom: -1px; position: relative; z-index: 1;`}
`;
const StdPanel = styled.div`
  height: 479px;
  border: 1px solid #bcbec2;
  padding: 11px 5px 0;
`;
const SpecSearch = styled.label`
  display: flex;
  align-items: center;
  gap: 6px;
  white-space: nowrap;
  input { flex: 1; height: 22px; border: 1px solid #c3c5c9; border-radius: 2px; padding: 0 2px; }
  input::placeholder { color: #97999d; opacity: 1; }
`;
const SpecScroll = styled.div`
  margin-top: 5px;
  height: 410px;
  overflow: hidden;
  border: 1px solid #bcbec2;
  border-right: 0;
`;
const SpecTable = styled.table`
  border-collapse: collapse;
  table-layout: fixed;
  width: 445px;
  th { height: 17px; padding: 0; background: #efefef; font-weight: 400; border: 1px solid #c4c6c9; border-width: 0 1px 1px 0; line-height: 15px; }
  td { height: 31px; padding: 0 3px; border: 1px solid #d2d3d5; border-left: 0; }
  tbody tr:nth-child(even) { background: #e8e7e3; }
`;
const Note = styled.p`padding-top: 7px;`;
const Actions = styled.div`display: flex; gap: 6px; justify-content: flex-end; padding: 7px 3px 0; `;
const Cancel = styled.button`width: 75px; height: 23px; border: 1px solid #c3c5c9; border-radius: 3px; background: #fff;`;

/* --------------------------------------------------------------- drawings */

const PStroke = styled.svg`fill: #d0e2fa; stroke: ${BLUE}; stroke-width: 1;`;
const smallI = "M12.500 16.500H26V20H22V45H26V48.500H12.500V45H17V20H12.500Z";
const profiles: Record<string, React.ReactNode> = {
  i: <path d="M15 12.500H48L34 17V47L48 52H15L29.500 47V17Z" />,
  h: <path strokeLinejoin="round" d="M15.500 12.500H48.500V17.500H34V47.500H48.500V52.500H15.500V47.500H29V17.500H15.500Z" />,
  l: <path d="M12.500 12.500Q17.500 13 17.500 18V44Q18 47 21 47H47Q52 47.500 52 52H12.500Z" />,
  l2: <path d="M12.500 17.500Q17.500 18 17.500 23V38Q18 41 21 41H47Q52 41.500 52 46H12.500Z" />,
  ring: (<><circle cx="32.500" cy="32.500" r="19.500" /><circle cx="32.500" cy="32.500" r="13.500" fill="#fff" /></>),
  disc: <circle cx="32.500" cy="32.500" r="19.500" />,
  u: <path d="M20.500 12.500H44Q43 17.500 39 17.500H29Q26 17.500 26 21V43Q26 47 29 47H39Q43 47 44 52H20.500Z" />,
  c: <path d="M19.500 12.500H44V24H39V20L36 17.500H28L25 20V44L28 47H36L39 44V41H44V52H19.500Z" />,
  z: <path d="M29.500 12.500H47L52 16.500V20.500L48 17.500H35V48Q35 52 31 52H17L12.500 47.500V43L17 47H26Q29.500 47 29.500 44Z" />,
  t: <path d="M12.500 12.500H52V17.500H40L35 22V52H29.500V22L24.500 17.500H12.500Z" />,
  tube: (<><rect x="19.500" y="12.500" width="24.500" height="39.500" rx="1" /><rect x="24.500" y="17.500" width="15" height="29.500" rx="3" fill="#fff" /></>),
  iTaper: (<><path d={smallI} /><path d="M28.500 17L52 29V48H28.500ZM28.500 20.500L52 33M28.500 43.500H52" /></>),
  iTaper2: (<><path d={smallI} /><path d="M28.500 16.500L52 22V42L28.500 48ZM28.500 20.500L52 26M28.500 44L52 38.500" /></>),
  hUneq: <path d="M12.500 13.500H52V18.500H35V45.500H46V51H18.500V45.500H30V18.500H12.500Z" />,
  cross: <path d="M22.500 12.500H44.500V17.500H36V28L37.500 29.500H48V21.500H53V43H48V35H37.500L36 36.500V47H44.500V52H22.500V47H30.500V36.500L29 35H19V43H13.500V21.500H19V29.500H29L30.500 28V17.500H22.500Z" />,
  boxTaper: (<><path d="M11.500 23.500H31V43H11.500ZM14.500 26.500H28V40H14.500Z" /><path d="M33.500 23.500L53 25.500V40.500L33.500 43ZM33.500 27L53 28.500M33.500 39.500L53 37.500" /></>),
  boxTaper2: (<><path d="M10.500 23.500H30V43H10.500ZM13.500 26.500H27V40H13.500Z" /><path d="M32.500 23.500L51 30V43H32.500ZM32.500 27L51 33.500M32.500 39H51" /></>),
  ringTaper: (<><circle cx="21.500" cy="33" r="9.500" /><circle cx="21.500" cy="33" r="6.500" /><path d="M33.500 23.500L53 25.500V40.500L33.500 43ZM33.500 27L53 28.500M33.500 39.500L53 37.500" /></>),
  tTaper: (<><path d="M12.500 16.500H26V20H21.500V48H17.500V20H12.500Z" /><path d="M28.500 17L52 29V48H28.500ZM28.500 20.500L52 33" /></>),
  ii: (<><path d="M12.500 12.500H52V17.500H42.500V47H52V52H12.500V47H21.500V17.500H12.500Z" /><path d="M26.500 17.500H37.500V47H26.500Z" fill="#fff" /></>),
  uLip: <path d="M15.500 13H25V18.500H21V47.500H43.500V18.500H38.500V13H48.500V52.500H15.500Z" />,
  ovalTaper: (<><ellipse cx="21.500" cy="33.500" rx="8" ry="9.500" /><ellipse cx="21.500" cy="33.500" rx="5" ry="6.500" /><path d="M32.500 24L52 26V41L32.500 43.500ZM32.500 27.500L52 29M32.500 40L52 38" /></>),
};
const Profile = ({ n }: { n: string }) => <PStroke width="64" height="64" viewBox="0 0 64 64">{profiles[n]}</PStroke>;

const rebars = [[232, 63], [232, 168], [232, 274], [232, 380], [232, 485], [338, 63], [443, 63], [549, 63], [338, 485], [443, 485], [549, 485]];
const SectionDrawing = () => (
  <svg width="884" height="548" viewBox="0 0 884 548" fill="none" role="img" aria-label="型钢截面">
    <path d="M214.500 45.500h458v459h-458zM216.500 47.500h454v455h-454z" stroke="#fff" />
    <path d="M227.500 59.500h432v432h-432zM227.500 166.500L337.500 59.500M549.500 59.500l110 107M227.500 383.500L338.500 490.500M548.500 490.500l111-107" stroke="#8a8a8a" />
    <path d="M337 476l-4 12M346 478l-5 12M338 490l5-2" stroke="#bbb" />
    {rebars.map(([x, y]) => <path key={`${x}-${y}`} d="M-1-3h2l2 2v2l-2 2h-2l-2-2v-2z" transform={`translate(${x} ${y})`} stroke="#a6a6a6" />)}
    <path d="M348 180H538V191H447V358H538V369H348V358H440V191H348Z" stroke="#fba60a" strokeWidth="2" />
  </svg>
);

const axes: [number, string][] = [[47, "3"], [80, "4"], [114, "5"], [181, "6"], [415, "7"], [472, "8"], [529, "9"], [586, "10"], [644, "11"], [702, "12"], [759, "13"], [816, "14"], [873, "15"], [930, "16"], [941, "17"]];
const PlanSvg = styled.svg`
  overflow: hidden;
  text { font-family: "Noto Sans", sans-serif; font-size: 17px; fill: #f2f2f2; text-anchor: middle; }
`;
const PlanDrawing = () => (
  <PlanSvg width="1100" height="200" viewBox="0 0 1100 200" fill="none" role="img" aria-label="轴网平面">
    <text x="362" y="12">121000</text>
    {axes.map(([x, t]) => (
      <g key={t}>
        <path d="M0-12V-16M0-12L8-9L12 0L8 9L0 12L-8 9L-12 0L-8-9Z" transform={`translate(${x} 25)`} stroke="#0c8a12" />
        <text x={x} y="31">{t}</text>
      </g>
    ))}
    <path d="M49.500 150V128M45 128h9l-4.500-9z" stroke="#00e020" fill="#00e020" strokeWidth="2" />
    <path d="M50 150H70M70 146v8l9-4z" stroke="#f00" fill="#f00" strokeWidth="2" />
    <circle cx="49.500" cy="150" r="5" fill="#0000c8" />
    <path d="M45 109l4 5 4-5M49 114v5" stroke="#00e020" />
    <path d="M82 145l8 10M90 145l-8 10" stroke="#f00" />
  </PlanSvg>
);

/* ------------------------------------------------------------------- data */

const menus = ["开始", "工程设置", "建模", "工程量", "视图", "工具", "云应用", "算量协作", "智能提量", "IGMS"];
const sideTop = ["剪力墙(Q)", "人防门框墙(RF)", "砌体墙(Q)", "砌体加筋(Y)", "保温墙(Q)", "暗梁(A)", "墙垛(E)", "幕墙(Q)"];
const sideSteel = ["钢柱(Z)", "型钢砼柱(Z)", "钢梁(L)", "钢板(B)", "栓钉", "桁架楼承板(B)", "组合板(压型钢板).", "组合板(混凝土)(B)", "组合板受力筋(S)", "组合板负筋(F)"];
const navRows: [string, string?][] = [
  ["施工段", "stage"], ["轴线", "grid"], ["柱", "column"], ["墙", "wall"], ["门窗洞", "opening"], ["梁", "beam"], ["板", "slab"],
  ["装配式", "precast"], ["钢结构", "steel"], ["钢柱(Z)"], ["型钢砼柱(Z)"], ["钢梁(L)"], ["钢板(B)"], ["栓钉"], ["桁架楼承板(B)"],
  ["组合板(压型钢板)(B)"], ["组合板(混凝土)(B)"], ["组合板受力筋(S)"], ["组合板负筋(F)"], ["空心楼盖", "hollow"], ["楼梯", "stair"],
  ["装修", "finish"], ["基坑支护", "pit"], ["土方", "earth"], ["基础", "base"], ["其它", "other"],
];
const tree: [number, string][] = [[0, "钢骨柱"], [1, "JGZ-1  <29>"], [2, "（砼柱）柱"], [2, "（型钢柱）GZ-1"], [1, "JGZ-2  <0>"], [2, "（砼柱）KZ-1"], [2, "（型钢柱）GZ-1"]];
const rolled = ["i", "h", "l", "l2", "ring", "disc", "u", "c", "z", "t", "tube"];
const welded = ["h", "iTaper", "iTaper2", "hUneq", "cross", "tube", "boxTaper", "boxTaper2", "ring", "ringTaper", "t", "tTaper", "ii", "uLip", "ovalTaper"];
const specs = [
  ["HW100*100*6*8", "16.9", "0.574"], ["HW125*125*6.5*9", "23.6", "0.723"], ["HW150*150*7*10", "31.1", "0.872"],
  ["HW175*175*7.5*11", "40.4", "1.01"], ["HW200*200*8*12", "49.9", "1.16"], ["HW200*204*12*12", "56.2", "1.17"],
  ["HW244*252*11*11", "63.8", "1.45"], ["HW250*250*9*14", "71.8", "1.46"], ["HW250*255*14*14", "81.6", "1.47"],
  ["HW294*302*12*12", "83.5", "1.75"], ["HW300*300*10*15", "93", "1.76"], ["HW300*305*15*15", "105", "1.77"], ["HW338*351*13*13", "105", "2.03"],
];
const displayRows: [string, boolean][] = [["幕墙", false], ["门窗洞", false], ["门", true], ["窗", true], ["门联窗", true], ["墙洞", false], ["带形窗", false], ["带形洞", false]];

/* ------------------------------------------------------------- components */

const RibbonTool = ({ i, t, off, more }: { i: string; t: string; off?: boolean; more?: boolean }) => (
  <Tool $off={off} disabled={off}><Glyph n={i} off={off} />{t}{more && <Caret c={off ? "#c0c2c5" : "#6b7078"} />}</Tool>
);
const Dots = () => (
  <svg width="7" height="14" viewBox="0 0 7 14" fill="#8d9096" aria-hidden="true">
    {[0, 4, 8, 12].map((y) => (<g key={y}><rect y={y} width="2" height="2" /><rect x="5" y={y} width="2" height="2" /></g>))}
  </svg>
);
const Logo = () => (
  <svg width="20" height="20" viewBox="0 0 20 20" aria-hidden="true">
    <path d="M0 6q5-6 12-6l4 3Q8 6 3 10z" fill="#1275ff" /><path d="M7 8l5-1v11l-3 1-2-2z" fill="#1275ff" /><path d="M19 16v4h-4z" fill="#777" />
  </svg>
);
const WinIcon = ({ d, s = 12 }: { d: string; s?: number }) => (
  <button aria-label="窗口"><GlyphSvg width={s} height={s} viewBox="0 0 12 12"><path d={d} /></GlyphSvg></button>
);

const RibbonBar = () => (
  <Ribbon>
    <Group $w={233}>
      <GroupBody>
        <SelectTool $w={56}>
          <svg width="22" height="30" viewBox="0 0 22 30"><path d="M2 2l18 17-8 2-7 7q-3 1-3-3z" fill="#cfe1fb" stroke={BLUE} strokeWidth="2" /></svg>选择
        </SelectTool>
        <Col $w={98}><RibbonTool i="pick" t="拾取构件" /><RibbonTool i="batch" t="批量选择" /><RibbonTool i="attr" t="按属性选择" /></Col>
        <Col $w={78}><RibbonTool i="find" t="查找图元" /><RibbonTool i="filter" t="过滤图元" off /></Col>
      </GroupBody>
    </Group>
    <Group $w={203} $pad={9}>
      <GroupBody>
        <Col $w={80}><RibbonTool i="scale" t="设置比例" off /><RibbonTool i="replace" t="查找替换" off /></Col>
        <Col $w={112}><RibbonTool i="floors" t="识别楼层表" off /><RibbonTool i="cad" t="CAD识别选项" more /></Col>
      </GroupBody>
    </Group>
    <Group $w={276} $pad={9}>
      <GroupBody>
        <Col $w={68}><RibbonTool i="define" t="定义" /><RibbonTool i="cloud" t="云检查" /></Col>
        <Col $w={111}><RibbonTool i="copyTo" t="复制到其它层" more /><RibbonTool i="flat" t="自动平齐顶板" off more /></Col>
        <Col $w={87}><RibbonTool i="axis" t="两点辅轴" more /><RibbonTool i="length" t="长度标注" more /></Col>
      </GroupBody>
    </Group>
    <Group $w={237} $pad={10}>
      <GroupBody>
        <Col $w={54}><RibbonTool i="trash" t="删除" /><RibbonTool i="copy" t="复制" /></Col>
        <Col $w={54}><RibbonTool i="rotate" t="旋转" /><RibbonTool i="mirror" t="镜像" /></Col>
        <Col $w={63}><RibbonTool i="trim" t="修剪" off /><RibbonTool i="align" t="对齐" more /></Col>
        <Col $w={54}><RibbonTool i="offset" t="偏移" off /><RibbonTool i="merge" t="合并" off /></Col>
      </GroupBody>
    </Group>
    <Group $w={69} $pad={6}>
      <GroupBody>
        <DrawGrid>
          <DrawTool $on aria-label="点"><Glyph n="point" /></DrawTool>
          <DrawTool aria-label="圆"><Glyph n="circle" off /></DrawTool>
          <DrawTool aria-label="直线"><Glyph n="line" off /></DrawTool>
          <DrawTool aria-label="矩形"><Glyph n="rect" off /></DrawTool>
        </DrawGrid>
      </GroupBody>
    </Group>
    <Group $w={220}>
      <GroupBody>
        <BigTool $w={92} $off>
          <svg width="32" height="38" viewBox="0 0 32 38" fill="none" stroke="#b9bbbe" strokeWidth="2">
            <path d="M2 9L16 1l13 8-13 8zM2 9v28M8 13v20M16 17v20M29 9v12M10 9l8-4 4 3-8 4z" /><path d="M4 11l3 2v24H4z" fill="#e2e3e5" stroke="none" />
            <circle cx="23" cy="28" r="6" /><path d="M27 32l4 5" />
          </svg>识别型钢砼柱
        </BigTool>
        <Col $w={120}><RibbonTool i="recog" t="识别钢骨柱大样" off /><RibbonTool i="recog" t="识别型钢柱" off /></Col>
      </GroupBody>
    </Group>
    <Group $w={229} $pad={5}>
      <GroupBody>
        <BigTool $w={57}>
          <svg width="32" height="38" viewBox="0 0 32 38" fill="none" stroke={BLUE} strokeWidth="2">
            <path d="M2 2h8v8H2zM22 2h8v8h-8zM2 28h8v8H2z" /><path d="M10 6h12M6 10v18M26 10v26" stroke={SLATE} />
          </svg>生成节点
        </BigTool>
        <BigTool $w={57}>
          <svg width="30" height="38" viewBox="0 0 30 38" fill="none" stroke={SLATE} strokeWidth="2">
            <path d="M10 34V6q0-4 5-4t5 4v28M1 35h28" /><path d="M10 16Q3 20 3 26v8h7M20 16q7 4 7 10v8h-7" stroke={BLUE} />
          </svg>生成细部
        </BigTool>
        <Col $w={105}><RibbonTool i="nodeEdit" t="编辑节点/细部" /><RibbonTool i="nodeMiss" t="节点缺失检查" /></Col>
      </GroupBody>
    </Group>
    <Group $w={79}>
      <GroupBody>
        <BigTool $w={62}>
          <svg width="32" height="38" viewBox="0 0 32 38" fill="none" stroke={SLATE} strokeWidth="2">
            <circle cx="4" cy="7" r="2.500" /><circle cx="4" cy="18" r="2.500" /><circle cx="4" cy="30" r="2.500" />
            <path d="M7 7h24M7 18h24M7 30h6M11 1v34M21 1v16" />
            <path d="M17 27v-4h4M26 23h4v4M30 32v4h-4M21 36h-4v-4M22 29.500h3" stroke={BLUE} strokeWidth="2.500" />
          </svg>智能布置<Caret c="#6b7078" />
        </BigTool>
      </GroupBody>
      <GroupLabel>智能布置</GroupLabel>
    </Group>
    <Group $w={125} $pad={9}>
      <GroupBody>
        <Col $w={100}><RibbonTool i="corner" t="判断边角柱" /><RibbonTool i="mark" t="查改标注" more /><RibbonTool i="slant" t="设置斜柱" /></Col>
      </GroupBody>
      <GroupLabel $pull={8}>型钢砼柱二次编辑</GroupLabel>
    </Group>
  </Ribbon>
);

const TrayIcons = () => (
  <>
    <svg width="16" height="16" viewBox="0 0 16 16"><path d="M3 4q3-4 6-2t6-2" stroke="#ddd" fill="none" /><rect x="0" y="6" width="16" height="8" rx="1" fill="#ddd" /><path d="M2 8.500h12M2 10.500h12M4 12.500h8" stroke="#555" strokeDasharray="1 1" /></svg>
    <svg width="16" height="16" viewBox="0 0 16 16"><circle cx="8" cy="8" r="7.500" fill="#1a2fae" stroke="#dfe4ff" /><path d="M5.500 6q0-3 2.500-3t2.500 2.500Q10.500 7 8 9M8 11v2" stroke="#fff" strokeWidth="1.800" fill="none" /></svg>
    <svg width="12" height="20" viewBox="0 0 12 20"><path d="M4 1h6v4H4zM1 3h6v4H1z" fill="#2a5c94" stroke="#fff" /><path d="M3 14h6l-3 3z" fill="#fff" /></svg>
    <svg width="17" height="17" viewBox="0 0 16 16"><rect width="16" height="16" rx="2" fill="#fff" /><path d="M2 10h12v5H2z" fill="#ef8b2c" /><path d="M2 12.500h12M6 10v5M10 10v5" stroke="#fff" /><path d="M13 1Q10 4 7.500 4 5 5 5.500 7.500T9 10q2 0 2-2L8 7q4-2 6 1 0 4-5 4.500Q3 12 3 7t5-5q3 0 5-1z" fill="#1b84e6" /></svg>
    <svg width="16" height="16" viewBox="0 0 16 16"><rect width="16" height="16" rx="3" fill="#f9a91c" /><path d="M3 11Q1 7 5 7q1-4 5-3t4 4-4 4q-3-1 0-5" stroke="#fff" strokeWidth="1.600" fill="none" /></svg>
    <svg width="16" height="16" viewBox="0 0 16 16"><circle cx="8" cy="8" r="7.500" fill="#5dc21e" /><path d="M4 8h8q0-4-4-4T4 8q0 4 4 4 3 0 4-2" stroke="#fff" strokeWidth="2" fill="none" /></svg>
    <svg width="16" height="18" viewBox="0 0 16 18"><path d="M3 0h5v4H3zM1 4h9v8l-3 3H4l-3-3z" fill="#999" /><circle cx="11" cy="12" r="5" fill="#28a428" /><path d="M8.500 12l2 2 3-4" stroke="#fff" fill="none" strokeWidth="1.500" /></svg>
    <svg width="16" height="16" viewBox="0 0 16 16"><path d="M1 5h3l6-5v16l-6-5H1z" fill="#d8452b" stroke="#f5c8b8" /><path d="M13 4q3 4 0 8" stroke="#b56" fill="none" /></svg>
    <svg width="17" height="17" viewBox="0 0 16 16"><circle cx="8" cy="8" r="7.500" fill="#f3c80a" /><path d="M2 5q6-7 12 0l-2 7q-6 5-10-2z" fill="#57b51c" /><path d="M8 4v8M4 8h8" stroke="#fff" strokeWidth="2.500" /></svg>
    <svg width="17" height="17" viewBox="0 0 34 34"><path d="M32 1Q26 10 17 10 10 11 10 18t8 7q6 0 7-5l-9-2q10-6 17 2-1 13-16 14Q1 32 1 17 4 2 18 3q8 1 14-2z" fill="#1c9af2" /></svg>
    <svg width="16" height="14" viewBox="0 0 16 14" fill="#fff"><path d="M0 11h2v2H0zM3 9h2v4H3zM6 6h2v7H6zM9 4h2v9H9zM12 1h2v12h-2z" /></svg>
    <svg width="16" height="14" viewBox="0 0 16 14"><path d="M0 4h3l4-4v14l-4-4H0z" fill="#fff" /><path d="M9 4q2 3 0 6M12 2q3 5 0 10" stroke="#fff" fill="none" /></svg>
  </>
);

const MainWindow = () => (
  <>
    <TitleBar>
      <QuickBar>
        <QuickButton $w={35} aria-label="广联达"><Logo /></QuickButton>
        {["upload", "newDoc", "open"].map((n) => <QuickButton key={n} aria-label={n}><Glyph n={n} /></QuickButton>)}
        <QuickButton aria-label="save"><Glyph n="save" off s={15} /></QuickButton>
        <QuickButton aria-label="undo"><Glyph n="undo" off s={14} /><Caret c="#aaa" /></QuickButton>
        <QuickButton aria-label="redo"><Glyph n="redo" off s={14} /><Caret c="#aaa" /></QuickButton>
        {["sum", "sheet", "gridS", "gridT", "sign", "ladder", "pageFit"].map((n) => <QuickButton key={n} aria-label={n}><Glyph n={n} /></QuickButton>)}
        <QuickButton $w={18} aria-label="more"><svg width="6" height="7" viewBox="0 0 6 7" fill={SLATE}><path d="M0 0h6v1H0zM0 3h6L3 7z" /></svg></QuickButton>
      </QuickBar>
      <h1>广联达BIM土建计量平台 GTJ2025 - [C:\Users\Administrator\Desktop\图形文件\冷鼓工程.GTJ]</h1>
      <WindowButtons $gap={24} $pad={13}>
        <WinIcon d="M3 8h6M3 9h6" /><WinIcon d="M2 4h7v6H2zM5 4V1h6v6H9" /><WinIcon d="M2 2l8 8M10 2l-8 8" />
      </WindowButtons>
    </TitleBar>
    <MenuBar>
      {menus.map((m) => <MenuTab key={m} $on={m === "建模"}>{m}</MenuTab>)}
      <MenuRight>
        <HelpSearch><input placeholder="请输入功能名称或问题描述" aria-label="搜索功能" /><Glyph n="search" s={11} /></HelpSearch>
        <User>
          <svg width="16" height="17" viewBox="0 0 16 17"><path d="M0 0h16v17H0z" fill="#9ccbfa" /><circle cx="8" cy="6" r="4" fill="#fff" /><path d="M1 17q0-7 7-7t7 7z" fill="#e8f2fd" /></svg>杨华
        </User>
        <TopIcon aria-label="客服"><Glyph n="head" /></TopIcon>
        <TopIcon aria-label="日历"><svg width="16" height="16" viewBox="0 0 16 16"><rect width="16" height="16" rx="2" fill="#e02020" /><path d="M1 4h14" stroke="#fff" /><path d="M3 10h10" stroke="#fff" strokeWidth="2" strokeDasharray="2 2" /></svg></TopIcon>
        <TopIcon aria-label="帮助">?<Caret /></TopIcon>
        <TopIcon aria-label="皮肤"><Glyph n="shirt" /></TopIcon>
        <TopIcon aria-label="收起"><Glyph n="chevron" s={14} /></TopIcon>
      </MenuRight>
    </MenuBar>
    <RibbonBar />
    <ContextBar><Combo w={100} value="冷凝泵房工程" label="工程" /><Combo w={90} value="基础层" label="楼层" /></ContextBar>
    <Work>
      <SideNav>
        <PanelHead><Dots />导航栏</PanelHead>
        {sideTop.map((t) => <SideItem key={t}>{t}</SideItem>)}
        <SideGroup><Solid n="opening" s={24} />门窗洞</SideGroup>
        <SideGroup><Solid n="beam" s={24} />梁</SideGroup>
        <SideGroup><Solid n="slab" s={24} />板</SideGroup>
        <SideGroup><Solid n="precast" s={24} />装配式<Badge>免费体验</Badge><LockMark><Glyph n="lock" s={12} /></LockMark></SideGroup>
        <SideGroup $on><Solid n="steel" s={24} active />钢结构</SideGroup>
        {sideSteel.map((t) => <SideItem key={t} $on={t === "型钢砼柱(Z)"}>{t}</SideItem>)}
        <SideGroup><Solid n="hollow" s={24} />空心楼盖</SideGroup>
        <SideGroup><Solid n="stair" s={24} />楼梯</SideGroup>
      </SideNav>
      <ListPane />
      <Viewport>
        <PlanDrawing />
        <ViewTools><Glyph n="view" s={20} /></ViewTools>
      </Viewport>
      <DisplayPane>
        <DisplayHead><Dots /><span>显示设置</span><WinIcon d="M2 2l8 8M10 2l-8 8" s={11} /></DisplayHead>
        <DisplayScroll>
          <DisplayTable>
            <colgroup><col width="142" /><col width="63" /><col width="63" /></colgroup>
            <tbody>
              {displayRows.map(([t, on]) => (
                <tr key={t}>
                  <td>{t === "门窗洞"
                    ? <NameCell><Expander open label="折叠门窗洞" />{t}</NameCell>
                    : <NameCell $child><Twig />{t}</NameCell>}</td>
                  <td><Check type="checkbox" defaultChecked={on} $partial={t === "门窗洞"} aria-label={`${t} 显示图元`} /></td>
                  <td><Check type="checkbox" aria-label={`${t} 显示名称`} /></td>
                </tr>
              ))}
            </tbody>
          </DisplayTable>
        </DisplayScroll>
        <PlainButton>恢复默认设置</PlainButton>
      </DisplayPane>
    </Work>
    <StatusBar>
      <StatusText $w={89}>层高：  1.8</StatusText>
      <StatusText $w={140}>标高：  -1.8~0</StatusText>
      <StatusText $w={109}>选中图元：0</StatusText>
      <StatusText $w={111}>隐藏图元：0</StatusText>
      <StatusTool aria-label="正交"><Glyph n="ortho" s={15} /></StatusTool>
      <StatusTool $w={36} $on aria-label="捕捉"><Glyph n="snapBox" /><Caret /></StatusTool>
      <StatusTool $w={36} $on aria-label="三维"><Glyph n="cube" /><Caret /></StatusTool>
      <StatusTool $gap={6} aria-label="交点"><Glyph n="cross" /></StatusTool>
      <StatusTool $w={36} aria-label="角度"><Glyph n="angle" /><Caret /></StatusTool>
      <StatusTool $w={36} aria-label="动态输入"><Glyph n="dynIn" /><Caret /></StatusTool>
      <StatusTool aria-label="框选"><Glyph n="winSel" /></StatusTool>
      <StatusTool $gap={15} aria-label="弧选"><Glyph n="arcSel" /></StatusTool>
      <Glyph n="expand" s={15} />
      <StatusText $w={300}> 按鼠标左键指定插入点,按右键结束或 ESC 取消</StatusText>
    </StatusBar>
    <TaskBar>
      <Start aria-label="开始">
        <svg width="38" height="38" viewBox="0 0 38 38">
          <defs><radialGradient id="orb" cx=".5" cy=".9" r=".9"><stop offset="0" stopColor="#5fc3f2" /><stop offset=".5" stopColor="#1d5a94" /><stop offset="1" stopColor="#8fb0cc" /></radialGradient></defs>
          <circle cx="19" cy="19" r="17.500" fill="url(#orb)" stroke="#173b5c" />
          <path d="M10 12q4-2 8 0l-2 7q-4-2-8 0z" fill="#e8562a" /><path d="M20 12q4 2 9 0l-2 7q-4 2-9 0z" fill="#8cc63f" />
          <path d="M8 21q4-2 8 0l-2 7q-3-2-8 0z" fill="#39a5e8" /><path d="M18 21q4 2 8 0l-2 7q-4 2-8 0z" fill="#fbcb2f" />
        </svg>
      </Start>
      <TaskGrip />
      <TaskButton aria-label="广联达工具">
        <svg width="34" height="34" viewBox="0 0 34 34"><path d="M32 1Q26 10 17 10 10 11 10 18t8 7q6 0 7-5l-9-2q10-6 17 2-1 13-16 14Q1 32 1 17 4 2 18 3q8 1 14-2z" fill="#1492f0" /></svg>
      </TaskButton>
      <TaskButton><AppTile>预</AppTile></TaskButton>
      <TaskButton aria-label="浏览器">
        <svg width="34" height="34" viewBox="0 0 34 34"><circle cx="17" cy="18" r="15" fill="#fff" /><path d="M8 19h19q0-10-10-10T7 19t10 10q6 0 9-5" fill="none" stroke="#57bd17" strokeWidth="5" /><path d="M4 28Q-1 18 14 8 26 0 29 5" fill="none" stroke="#7ccf2c" strokeWidth="2.500" /></svg>
      </TaskButton>
      <TaskButton $on aria-label="土建计量">
        <svg width="32" height="32" viewBox="0 0 32 32"><rect width="32" height="32" rx="5" fill="#246bfb" /><path d="M5 13L21 5l6 6-16 6z" fill="#fff" /><path d="M13 17l6-2v12l-6-4z" fill="#e6eeff" /></svg>
      </TaskButton>
      <Tray>
        <TrayGrip />
        <TrayIcons />
        <Clock>{"16:57\n2025/3/9"}</Clock>
        <svg width="16" height="14" viewBox="0 0 16 14"><path d="M0 0h16v14H0z" fill="#fff" /><path d="M6 4l4 3-4 3z" fill="#123" stroke="#123" /></svg>
        <ShowDesktop aria-label="显示桌面" />
      </Tray>
    </TaskBar>
  </>
);

const DefineDialog = () => {
  const [spec, setSpec] = useState("350*350*12*19*19");
  return (
    <DefineWindow aria-label="定义">
      <WinTitle>
        <h2>定义</h2>
        <WindowButtons $gap={16} $pad={12}>
          <WinIcon d="M1 10h10" /><WinIcon d="M1.500 1.500h9v9h-9z" /><WinIcon d="M1 1l10 10M11 1L1 11" />
        </WindowButtons>
      </WinTitle>
      <WinTools>
        <Combo w={99} value="冷凝泵房工程" label="工程" framed />
        <Combo w={99} value="基础层" label="楼层" framed />
        <Rule />
        <WinTool $gap={6}><Glyph n="layers" />层间复制</WinTool>
        <WinTool $gap={6}><Glyph n="saveC" />构件存盘<Caret c="#9a9da3" /></WinTool>
        <WinTool $gap={3}><Glyph n="prefix" />添加前后缀</WinTool>
        <WinTool><Glyph n="unused" />删除未使用构件</WinTool>
        <Rule $l={6} />
        <WinTool $gap={6}><Glyph n="check" />检查做法</WinTool>
        <WinTool $gap={10}><Glyph n="plan" />自动套方案维护</WinTool>
        <WinTool $gap={10}><Glyph n="batchH" />批量自动套做法</WinTool>
      </WinTools>
      <Docks>
        <Dock>
          <DockBand /><DockHead>导航栏</DockHead>
          <NavScroll>
            <ul>
              {navRows.map(([t, icon]) => (
                <li key={t}><NavRow $child={!icon} $on={t === "型钢砼柱(Z)"}>
                  {icon && <Solid n={icon} />}<span>{t}</span>{t === "装配式" && <Glyph n="lock" s={12} />}
                </NavRow></li>
              ))}
            </ul>
            <Thumb />
          </NavScroll>
        </Dock>
        <DockStack>
          <Dock>
            <DockBand /><DockHead>构件列表</DockHead>
            <SoftTools>
              <SoftTool aria-label="新建"><Glyph n="newDoc" /></SoftTool>
              <SoftTool $w={12} $join aria-label="新建选项"><Caret c="#999" /></SoftTool>
              <SoftTool aria-label="复制"><Glyph n="copy" /></SoftTool>
              <SoftTool aria-label="删除"><Glyph n="trash" /></SoftTool>
            </SoftTools>
            <SoftSearch><input placeholder="搜索构件..." aria-label="搜索构件" /><Glyph n="search" s={12} off /></SoftSearch>
            <ul>
              {tree.map(([d, t], i) => (
                <TreeRow key={i} $depth={d}>{d < 2 && <Caret c="#888" />}<TreeLabel $on={i === 1}>{t}</TreeLabel></TreeRow>
              ))}
            </ul>
          </Dock>
          <Dock>
            <DockBand /><DockHead>属性列表</DockHead>
            <PropTable>
              <colgroup><col width="22" /><col width="101" /><col width="103" /><col width="40" /></colgroup>
              <thead><tr><th /><th>属性名称</th><th>属性值</th><th>附加</th></tr></thead>
              <tbody>
                <tr><th>1</th><td><PropName><Expander open label="折叠" />基础属性</PropName></td><td /><td /></tr>
                <tr><th>2</th><td><PropName $key><Twig />名称</PropName></td><td>JGZ-1</td><td /></tr>
                <tr><th>3</th><td><PropName $key><Twig $end />类别</PropName></td><td><Muted>钢骨柱</Muted></td><td /></tr>
                <tr><th>4</th><td><PropName><Expander label="展开柱" />柱</PropName></td><td /><td /></tr>
                <tr><th>61</th><td><PropName><Expander label="展开GZ-1" />GZ-1</PropName></td><td /><td /></tr>
              </tbody>
            </PropTable>
          </Dock>
        </DockStack>
        <Dock $bare>
          <DockBand />
          <DockTabs><DockTab>截面编辑</DockTab><DockTab $on>编辑型钢</DockTab><DockTab>构件做法</DockTab></DockTabs>
          <EditTools>
            <EditTool><Glyph n="beam" s={15} />新建型钢</EditTool>
            <EditTool $l={15}><Glyph n="odd" />新建异形型钢</EditTool>
            <Rule $l={14} />
            <EditTool $l={11} aria-label="点"><Glyph n="point" /></EditTool>
            <EditTool $l={19} aria-label="移动"><Glyph n="move" /></EditTool>
            <EditTool $l={19} aria-label="旋转"><Glyph n="rotate" /></EditTool>
            <EditTool as="label" htmlFor="angle" $l={14}>角度：</EditTool>
            <AngleInput id="angle" defaultValue="0" disabled />°
            <EditTool $l={8}><Glyph n="beamDel" />删除型钢</EditTool>
            <Rule $l={12} />
            <CheckLabel><Check type="checkbox" defaultChecked />显示CAD底图</CheckLabel>
          </EditTools>
          <Stage>
            <SectionDrawing />
            <SpecLabel>型钢规格:
              <SpecBox>
                <input value={spec} onChange={(e) => setSpec(e.target.value)} aria-label="型钢规格" />
                <button aria-label="选择截面"><svg width="10" height="2" viewBox="0 0 10 2" fill={BLUE}><path d="M0 0h2v2H0zM4 0h2v2H4zM8 0h2v2H8z" /></svg></button>
              </SpecBox>
            </SpecLabel>
          </Stage>
          <EditStatus>
            <StatusTool $on $gap={1} aria-label="动态输入"><Glyph n="dynInOn" /></StatusTool>
            <p>(X: -484 Y: 426)请选择型钢进行编辑</p>
          </EditStatus>
        </Dock>
      </Docks>
    </DefineWindow>
  );
};

const LibraryDialog = () => (
  <LibraryWindow aria-label="截面库">
    <h2>截面库</h2>
    <LibraryBody>
      <div>
        <SectionLabel $t={9}>型材截面</SectionLabel>
        <ProfileGrid $h={262}>{rolled.map((n) => <ProfileCell key={n} $on={n === "h"} aria-label={n}><Profile n={n} /></ProfileCell>)}</ProfileGrid>
        <SectionLabel $t={6}>焊接截面</SectionLabel>
        <ProfileGrid $h={197}>{welded.map((n) => <ProfileCell key={n} aria-label={n}><Profile n={n} /></ProfileCell>)}</ProfileGrid>
      </div>
      <div>
        <Tabs><StdTab $on>2017标准</StdTab><StdTab>2010标准</StdTab></Tabs>
        <StdPanel>
          <SpecSearch>截面规格：<input placeholder="快速搜索，如:C 200*70*20*2" /></SpecSearch>
          <SpecScroll>
            <SpecTable>
              <colgroup><col width="190" /><col width="127" /><col width="128" /></colgroup>
              <thead><tr><th>规格</th><th>延米重(kg/m)</th><th>表面积(m²/m)</th></tr></thead>
              <tbody>{specs.map((r) => <tr key={r[0]}>{r.map((c, i) => <td key={i}>{c}</td>)}</tr>)}</tbody>
            </SpecTable>
          </SpecScroll>
          <Note>注：数据来源GB/T 11263-2017《热轧H型钢和部分T型钢》</Note>
        </StdPanel>
      </div>
      <Primary $w={102}>查看型钢代号表</Primary>
      <Primary $w={102}>添加自定义截面</Primary>
    </LibraryBody>
    <Actions><Primary $w={75} $h={23}>确定</Primary><Cancel>取消</Cancel></Actions>
  </LibraryWindow>
);

export default function App() {
  return (
    <Desktop>
      <Global />
      <MainWindow />
      <Tip role="tooltip">
        可以通过识别钢骨柱大样快速识
        <button aria-label="关闭提示"><svg width="8" height="8" viewBox="0 0 8 8" stroke="#fff"><path d="M0 0l8 8M8 0L0 8" /></svg></button>
      </Tip>
      <DefineDialog />
      <LibraryDialog />
    </Desktop>
  );
}
